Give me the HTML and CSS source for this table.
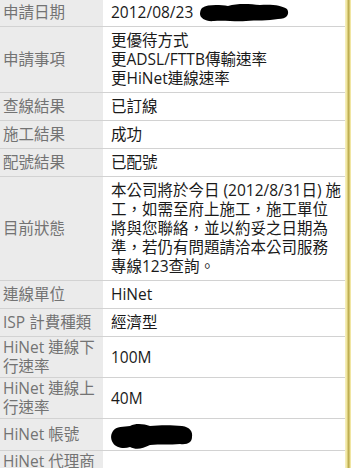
FILE: index.html
```html
<!DOCTYPE html>
<html lang="zh-Hant">
<head>
<meta charset="utf-8">
<link rel="stylesheet" href="styles.css">
</head>
<body>
<div class="page">
  <div class="sheet">
    <div class="row first">
      <div class="label">申請日期</div>
      <div class="value">2012/08/23 <svg class="blot blot-date" width="92" height="19" viewBox="0 0 92 19"><path d="M4 5 C10 1 22 2 30 3 C40 0 52 1 62 2 C72 1 84 2 89 6 C92 11 89 16 80 16 C70 18 58 17 48 18 C38 19 26 17 16 18 C8 19 2 15 2 11 C2 8 3 6 4 5 Z" fill="#000"/></svg></div>
    </div>
    <div class="row">
      <div class="label">申請事項</div>
      <div class="value">更優待方式<br>更ADSL/FTTB傳輸速率<br>更HiNet連線速率</div>
    </div>
    <div class="row">
      <div class="label">查線結果</div>
      <div class="value">已訂線</div>
    </div>
    <div class="row">
      <div class="label">施工結果</div>
      <div class="value">成功</div>
    </div>
    <div class="row">
      <div class="label">配號結果</div>
      <div class="value">已配號</div>
    </div>
    <div class="row">
      <div class="label">目前狀態</div>
      <div class="value nowrap">本公司將於今日 (2012/8/31日) 施<br>工，如需至府上施工，施工單位<br>將與您聯絡，並以約妥之日期為<br>準，若仍有問題請洽本公司服務<br>專線123查詢。</div>
    </div>
    <div class="row">
      <div class="label">連線單位</div>
      <div class="value">HiNet</div>
    </div>
    <div class="row">
      <div class="label">ISP 計費種類</div>
      <div class="value">經濟型</div>
    </div>
    <div class="row">
      <div class="label">HiNet 連線下行速率</div>
      <div class="value">100M</div>
    </div>
    <div class="row">
      <div class="label">HiNet 連線上行速率</div>
      <div class="value">40M</div>
    </div>
    <div class="row">
      <div class="label">HiNet 帳號</div>
      <div class="value"><svg class="blot blot-acct" width="84" height="27" viewBox="0 0 84 27"><path d="M3 8 C6 3 14 4 20 3 C26 0 34 1 40 3 C50 2 62 2 72 3 C80 4 83 9 82 14 C82 19 78 22 70 21 C60 22 50 21 40 22 C32 26 26 27 20 24 C14 26 6 25 3 20 C0 15 1 11 3 8 Z" fill="#000"/></svg></div>
    </div>
    <div class="row">
      <div class="label">HiNet 代理商</div>
      <div class="value"></div>
    </div>
  </div>
  <div class="edge"></div>
</div>
</body>
</html>
```
FILE: styles.css
```css
html, body {
  margin: 0;
  padding: 0;
  background: #ffffff;
}

body {
  font-family: "Open Sans", "Noto Sans CJK TC", sans-serif;
  font-size: 15.5px;
  line-height: 19px;
  overflow: hidden;
  height: 468px;
}

.page {
  display: flex;
  width: 351px;
  min-height: 468px;
}

.sheet {
  width: 345px;
  display: flex;
  flex-direction: column;
  margin-top: -1px;
}

.row {
  display: grid;
  grid-template-columns: 103px 1fr;
  border-bottom: 1px solid #d2d2d2;
}

.label {
  background: #ebebeb;
  color: #737373;
  padding: 1px 2px 1px 3px;
  display: flex;
  align-items: center;
}

.value {
  color: #1a1a1a;
  padding: 4px 2px 4px 8px;
  display: block;
  align-self: center;
}

.nowrap {
  white-space: nowrap;
}

.blot {
  vertical-align: middle;
}

.blot-date {
  margin-left: 1px;
  margin-top: -3px;
}

.blot-acct {
  display: block;
  margin: 0 0 -4px -1px;
}

.edge {
  width: 6px;
  background: linear-gradient(to right, #f7f1c4 0, #efe49a 2px, #c3b45a 3px, #b8a84c 4px, #efe39a 5px, #f3eab0 6px);
}
```
